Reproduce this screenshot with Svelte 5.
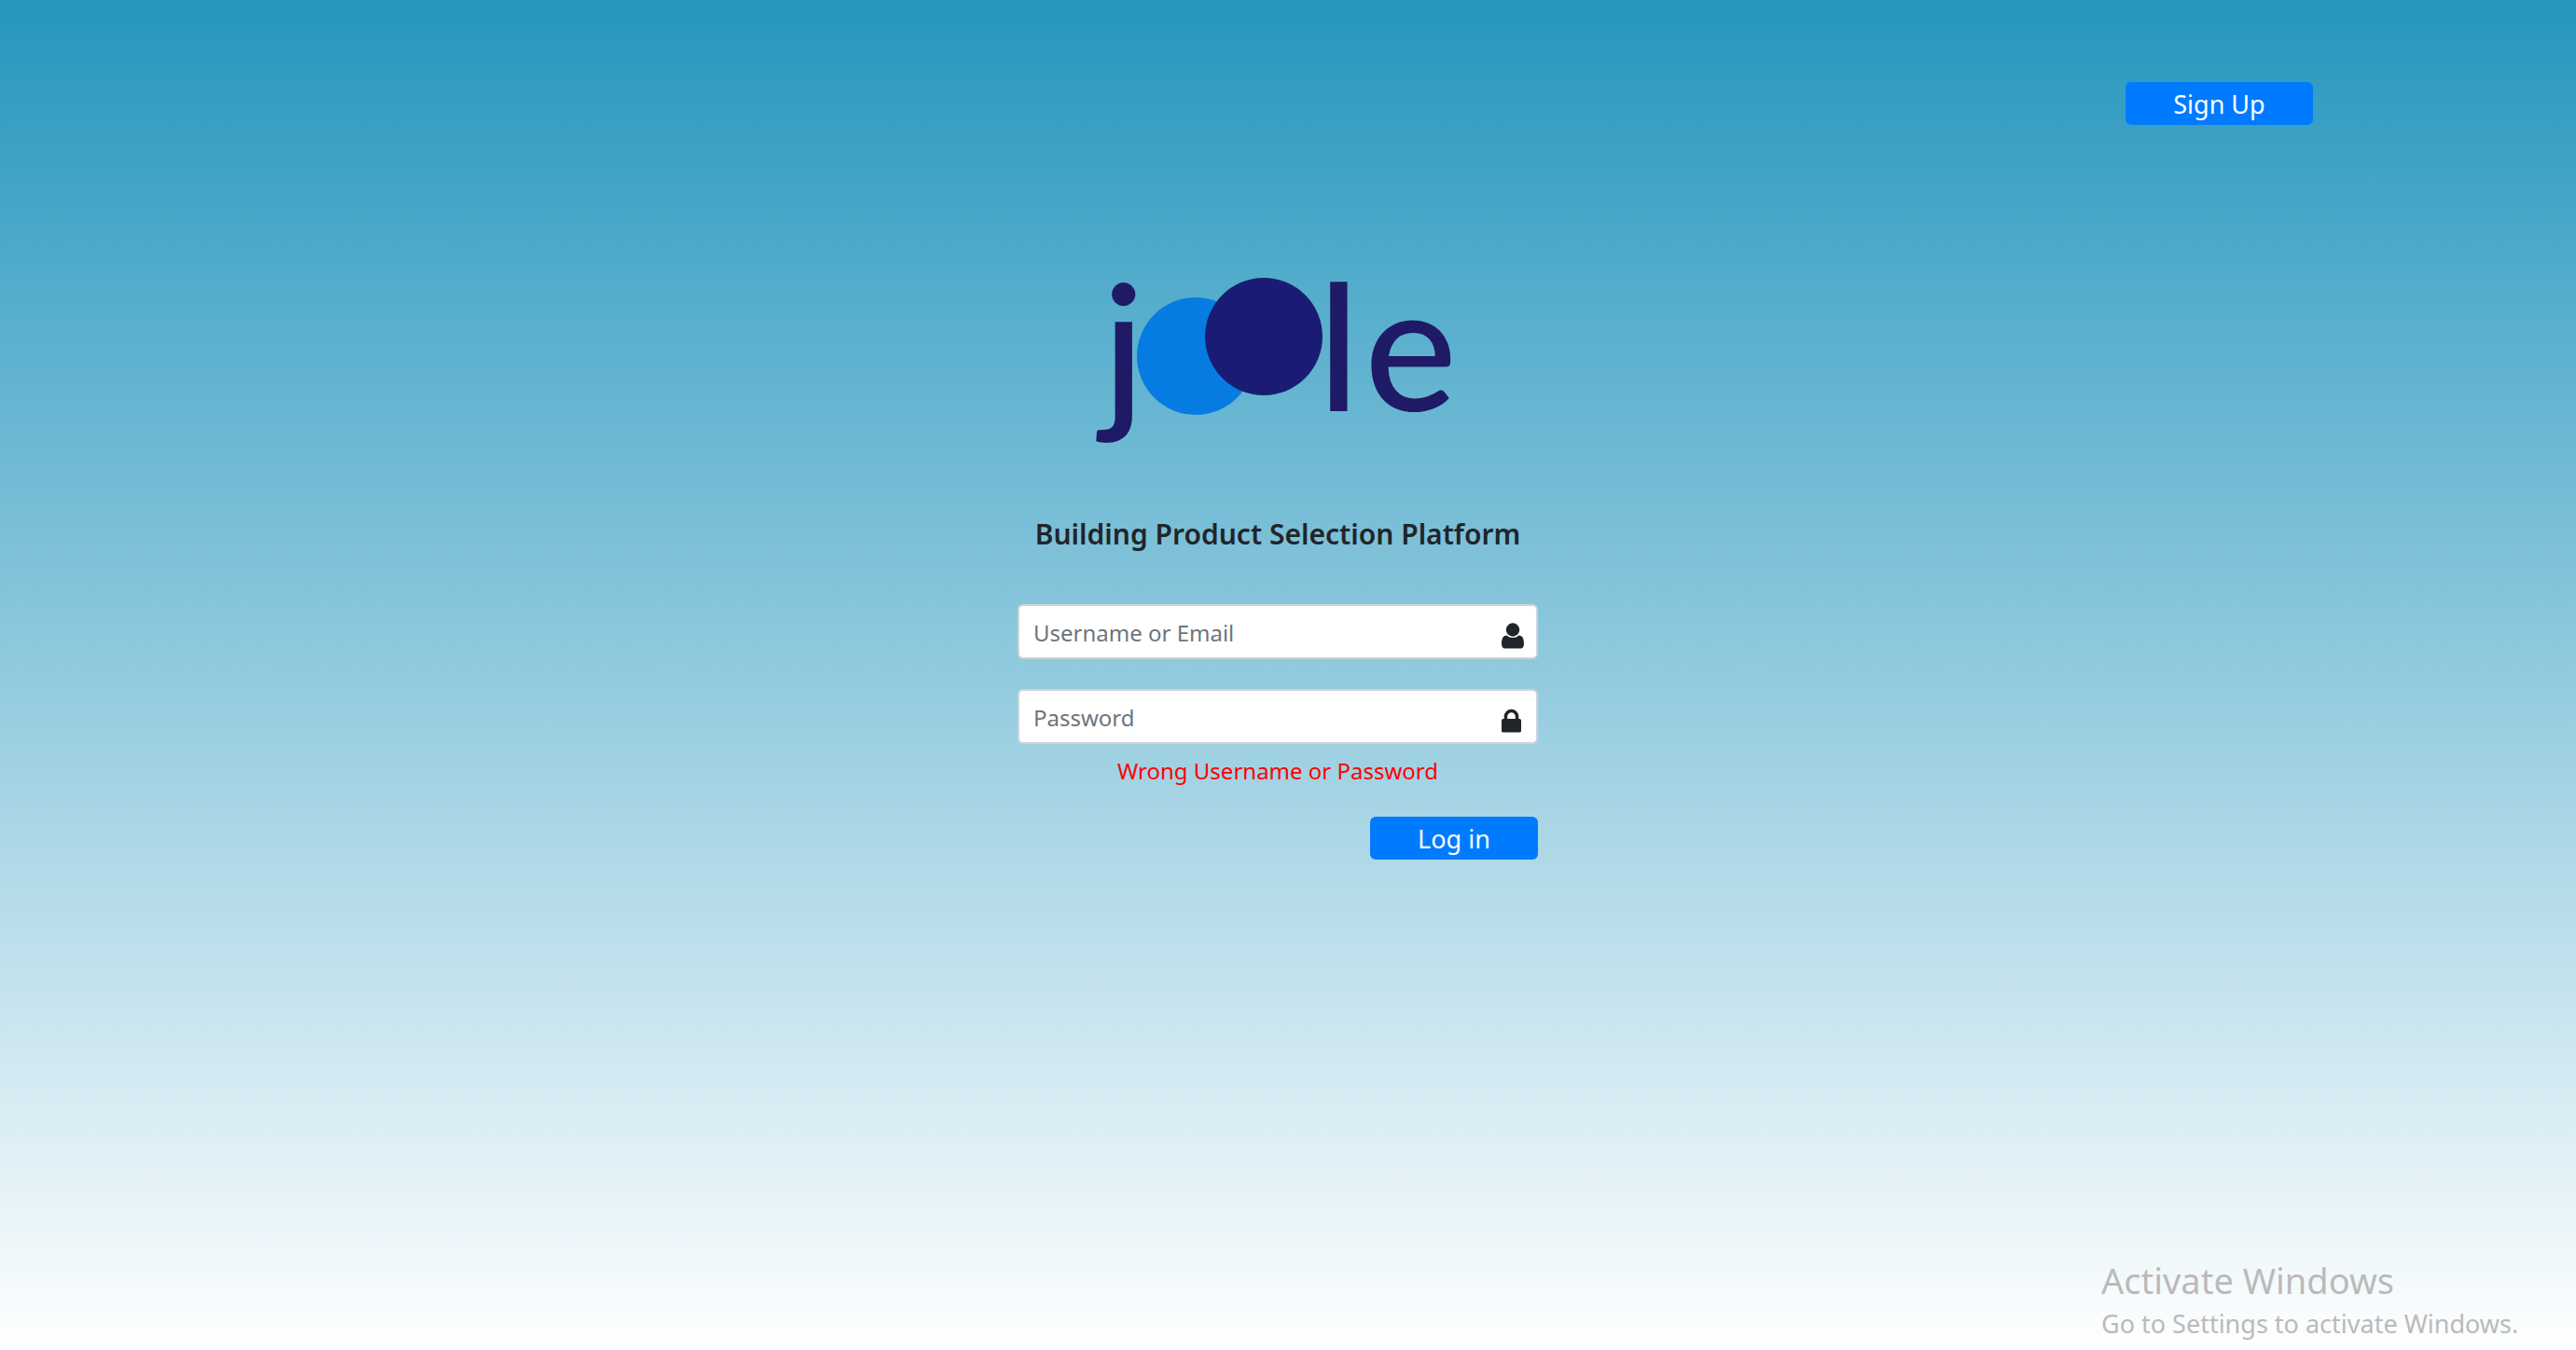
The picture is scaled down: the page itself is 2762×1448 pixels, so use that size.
<script>
  let username = $state('');
  let password = $state('');
</script>

<svelte:head>
  <title>Joole</title>
</svelte:head>

<div class="page">
  <header>
    <button class="btn signup" type="button">Sign Up</button>
  </header>

  <main>
    <svg class="logo" viewBox="0 0 396 200" role="img" aria-label="joole">
      <circle class="pale" cx="110" cy="92" r="63" />
      <circle class="deep" cx="183" cy="71" r="63" />
      <text x="10" y="151">j</text>
      <text x="241" y="151">l</text>
      <text x="291" y="151">e</text>
    </svg>

    <h1>Building Product Selection Platform</h1>

    <form onsubmit={(e) => e.preventDefault()}>
      <div class="field">
        <input type="text" aria-label="Username or Email" placeholder="Username or Email" bind:value={username} />
        <svg class="icon" viewBox="0 0 24 28" aria-hidden="true">
          <path d="M5.600 13.600C7.500 15.400 9.600 16 12 16s4.500-.6 6.400-2.400C22.600 13.600 24 17.500 24 22.500c0 3-1.200 5-3.500 5h-17C1.200 27.500 0 25.500 0 22.500 0 17.500 1.400 13.600 5.600 13.600z" />
          <circle cx="12" cy="7.500" r="7.200" />
        </svg>
      </div>
      <div class="field">
        <input type="password" aria-label="Password" placeholder="Password" bind:value={password} />
        <svg class="icon" viewBox="0 0 24 28" aria-hidden="true">
          <path fill-rule="evenodd" d="M2.700 12V9.500a7.800 7.800 0 0 1 15.600 0V12h.9c1 0 1.800.8 1.800 1.800v10.900c0 1-.8 1.800-1.800 1.800H1.800c-1 0-1.800-.8-1.800-1.800V13.800C0 12.800.8 12 1.800 12zM6.200 12h8.600V9.500a4.300 4.300 0 0 0-8.600 0z" />
        </svg>
      </div>
      <p class="error" role="alert">Wrong Username or Password</p>
      <button class="btn login" type="submit">Log in</button>
    </form>
  </main>

  <aside>
    <p class="notice">Activate Windows</p>
    <p class="hint">Go to Settings to activate Windows.</p>
  </aside>
</div>

<style>
  :global(body) {
    margin: 0;
  }

  .page {
    box-sizing: border-box;
    min-height: 100vh;
    display: flex;
    flex-direction: column;
    padding: 88px 22px 8px 0;
    background: linear-gradient(#2596be, #fff);
    color: #212529;
    font-family: 'Segoe UI', 'Noto Sans', sans-serif;
    font-size: 24px;
    line-height: 36px;
  }

  header {
    display: flex;
    justify-content: flex-end;
    padding-right: 260px;
  }

  .btn {
    height: 46px;
    padding: 2px 0 0;
    border: 0;
    border-radius: 6px;
    background: #007bff;
    color: #fff;
    font: inherit;
    font-size: 27px;
    line-height: 44px;
    cursor: pointer;
  }

  .signup {
    width: 201px;
  }

  .login {
    width: 180px;
    align-self: flex-end;
  }

  main {
    flex: 1;
    display: flex;
    flex-direction: column;
    align-items: center;
    padding-top: 156px;
  }

  .logo {
    width: 396px;
    height: 200px;
    overflow: visible;
  }

  .logo text {
    fill: #1f1a66;
    font: 500 187px Lato, sans-serif;
  }

  .pale {
    fill: #067ce3;
  }

  .deep {
    fill: #1a1c73;
  }

  h1 {
    margin: 61px 0 53px;
    font-size: 30px;
    font-weight: 600;
    line-height: 44px;
  }

  form {
    width: 558px;
    max-width: 100%;
    display: flex;
    flex-direction: column;
  }

  .field {
    position: relative;
    margin-bottom: 32px;
  }

  input {
    display: block;
    box-sizing: border-box;
    width: 100%;
    height: 59px;
    padding: 2px 52px 0 15px;
    border: 2px solid #ced4da;
    border-radius: 6px;
    background: #fff;
    color: #495057;
    font: inherit;
  }

  input::placeholder {
    color: #6c757d;
    opacity: 1;
  }

  .icon {
    position: absolute;
    top: 20px;
    right: 15px;
    width: 24px;
    height: 28px;
    fill: #212529;
  }

  .error {
    margin: -21px 0 31px;
    color: #f00;
    text-align: center;
  }

  aside {
    align-self: flex-end;
    width: 487px;
    color: #bababa;
  }

  .notice,
  .hint {
    margin: 0;
  }

  .notice {
    font-size: 38px;
    line-height: 54px;
  }

  .hint {
    font-size: 27px;
    line-height: 40px;
  }
</style>
